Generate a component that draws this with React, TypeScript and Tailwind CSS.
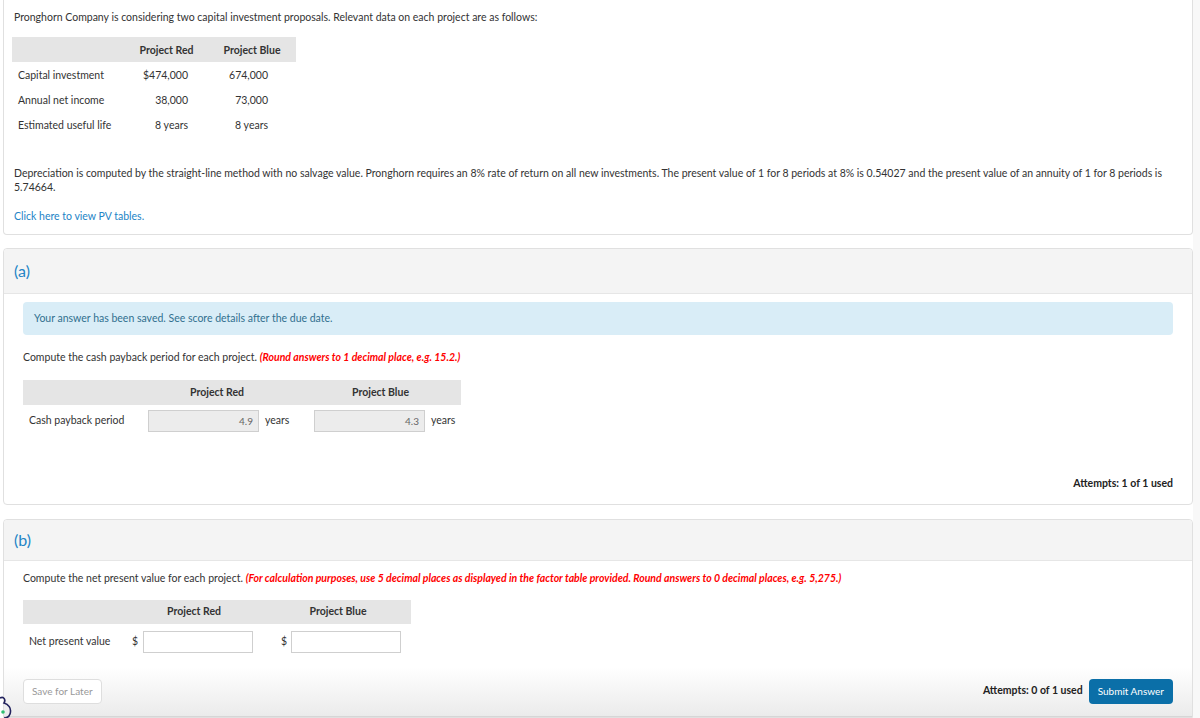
const cellBase = 'flex items-center'

function InfoTable() {
  const rows = [
    ['Capital investment', '$474,000', '674,000'],
    ['Annual net income', '38,000', '73,000'],
    ['Estimated useful life', '8 years', '8 years'],
  ]
  return (
    <div className="mt-[13px] ml-[-2px] w-[284px]">
      <div className="grid grid-cols-[113px_83px_88px] h-[25px] bg-[#e5e5e5] font-bold text-[#333]">
        <div />
        <div className={`${cellBase} justify-center`}>Project Red</div>
        <div className={`${cellBase} justify-center`}>Project Blue</div>
      </div>
      {rows.map(([label, red, blue]) => (
        <div key={label} className="grid grid-cols-[113px_83px_88px] h-[25px]">
          <div className={`${cellBase} pl-[6px]`}>{label}</div>
          <div className={`${cellBase} justify-end pr-[20px]`}>{red}</div>
          <div className={`${cellBase} justify-end pr-[28px]`}>{blue}</div>
        </div>
      ))}
    </div>
  )
}

function PartHeader({ label, h }: { label: string; h: string }) {
  return (
    <div className={`${h} bg-[#f4f4f4] border-b border-[#e6e6e6] flex items-center pl-[10px] rounded-t`}>
      <span className="text-[16px] text-[#2384c6]">{label}</span>
    </div>
  )
}

function ReadonlyBox({ value }: { value: string }) {
  return (
    <div className="w-[111px] h-[22px] bg-[#ececec] border border-[#cfcfcf] flex items-center justify-end pr-[5px] text-[10px] text-[#666]">
      {value}
    </div>
  )
}

function EmptyBox() {
  return <div className="w-[110px] h-[22px] bg-white border border-[#cfcfcf]" />
}

export default function App() {
  return (
    <div className="relative min-h-screen bg-white font-['Lato','Open_Sans',sans-serif] text-[10.5px] text-[#333] flex">
      <div className="w-[1193px] pl-[3px] pb-[3px]">
        {/* problem statement */}
        <div className="border border-t-0 border-[#e0e0e0] rounded-b pl-[10px] pr-[20px] pt-[10px] pb-[11px] leading-[14px]">
          <p>
            Pronghorn Company is considering two capital investment proposals. Relevant data on each project are as follows:
          </p>
          <InfoTable />
          <p className="mt-[29px]">
            Depreciation is computed by the straight-line method with no salvage value. Pronghorn requires an 8% rate of return on all new investments. The present value of 1 for 8 periods at 8% is 0.54027 and the present value of an annuity of 1 for 8 periods is 5.74664.
          </p>
          <p className="mt-[15px] text-[#2384c6]">Click here to view PV tables.</p>
        </div>

        {/* part a */}
        <div className="mt-[13px] border border-[#e0e0e0] rounded">
          <PartHeader label="(a)" h="h-[45px]" />
          <div className="px-[19px] pt-[8px] pb-[12px]">
            <div className="h-[33px] bg-[#d9edf7] rounded-sm flex items-center pl-[11px] text-[#31708f]">
              Your answer has been saved. See score details after the due date.
            </div>
            <p className="mt-[15px] leading-[14px]">
              Compute the cash payback period for each project.{' '}
              <span className="font-bold italic text-[#ff0000]">(Round answers to 1 decimal place, e.g. 15.2.)</span>
            </p>
            <div className="mt-[16px] w-[438px]">
              <div className="grid grid-cols-[111px_166px_161px] h-[25px] bg-[#e5e5e5] font-bold">
                <div />
                <div className={`${cellBase} justify-center`}>Project Red</div>
                <div className={`${cellBase} justify-center`}>Project Blue</div>
              </div>
              <div className="grid grid-cols-[111px_166px_161px] pt-[5px]">
                <div className={`${cellBase} pl-[6px]`}>Cash payback period</div>
                <div className={`${cellBase} pl-[14px] gap-[6px]`}>
                  <ReadonlyBox value="4.9" />
                  <span>years</span>
                </div>
                <div className={`${cellBase} pl-[14px] gap-[6px]`}>
                  <ReadonlyBox value="4.3" />
                  <span>years</span>
                </div>
              </div>
            </div>
            <div className="mt-[44px] text-right font-bold text-[#222]">Attempts: 1 of 1 used</div>
          </div>
        </div>

        {/* part b */}
        <div className="mt-[14px] border border-[#e0e0e0] rounded-t">
          <PartHeader label="(b)" h="h-[41px]" />
          <div className="px-[19px] pt-[10px]">
            <p className="leading-[14px]">
              Compute the net present value for each project.{' '}
              <span className="font-bold italic text-[#ff0000]">
                (For calculation purposes, use 5 decimal places as displayed in the factor table provided. Round answers to 0 decimal places, e.g. 5,275.)
              </span>
            </p>
            <div className="mt-[15px] w-[388px]">
              <div className="grid grid-cols-[100px_142px_146px] h-[24px] bg-[#e5e5e5] font-bold">
                <div />
                <div className={`${cellBase} justify-center`}>Project Red</div>
                <div className={`${cellBase} justify-center`}>Project Blue</div>
              </div>
              <div className="flex items-center pt-[7px]">
                <div className="w-[109px] pl-[6px]">Net present value</div>
                <span>$</span>
                <div className="ml-[5px]">
                  <EmptyBox />
                </div>
                <span className="ml-[28px]">$</span>
                <div className="ml-[4px]">
                  <EmptyBox />
                </div>
              </div>
            </div>
          </div>
          <div className="mt-[14px] h-[50px] bg-gradient-to-b from-white to-[#ebebeb] border-b border-[#d6d6d6] flex items-center justify-between px-[19px]">
            <button className="h-[25px] px-[8px] bg-white border border-[#dedede] rounded-sm text-[10px] text-[#999]">
              Save for Later
            </button>
            <div className="flex items-center gap-[6px]">
              <span className="font-bold text-[#222]">Attempts: 0 of 1 used</span>
              <button className="h-[25px] px-[9px] bg-[#0b6fa8] rounded-sm text-[10px] text-white">
                Submit Answer
              </button>
            </div>
          </div>
        </div>
      </div>
      <div className="flex-1 bg-[#f8f8f8]" />

      {/* chat widget peeking in */}
      <svg className="absolute left-0 top-[696px]" width="16" height="22" viewBox="0 0 16 22">
        <path d="M0 2 C4 0 6 4 4 7 C8 8 12 12 10 18 C9 21 6 22 4 22" fill="none" stroke="#23235e" strokeWidth="1.6" />
        <circle cx="3" cy="16" r="1.8" fill="#2fbf71" />
      </svg>
    </div>
  )
}
